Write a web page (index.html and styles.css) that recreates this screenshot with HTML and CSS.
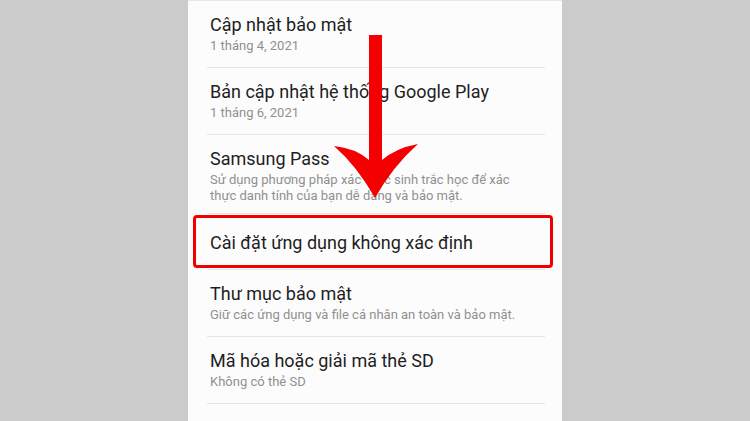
FILE: index.html
```html
<!DOCTYPE html>
<html lang="vi">
<head>
<meta charset="utf-8">
<link rel="stylesheet" href="styles.css">
</head>
<body>
<div class="stage">
  <div class="panel">
    <div class="item">
      <div class="title">Cập nhật bảo mật</div>
      <div class="desc">1 tháng 4, 2021</div>
    </div>
    <div class="item">
      <div class="title">Bản cập nhật hệ thống Google Play</div>
      <div class="desc">1 tháng 6, 2021</div>
    </div>
    <div class="item tight">
      <div class="title">Samsung Pass</div>
      <div class="desc">Sử dụng phương pháp xác thực sinh trắc học để xác thực danh tính của bạn dễ dàng và bảo mật.</div>
    </div>
    <div class="item single highlight">
      <div class="title">Cài đặt ứng dụng không xác định</div>
    </div>
    <div class="item">
      <div class="title">Thư mục bảo mật</div>
      <div class="desc">Giữ các ứng dụng và file cá nhân an toàn và bảo mật.</div>
    </div>
    <div class="item">
      <div class="title">Mã hóa hoặc giải mã thẻ SD</div>
      <div class="desc">Không có thẻ SD</div>
    </div>
    <div class="item last">
      <div class="title">Cài đặt bảo mật khác</div>
    </div>
  </div>
  <svg class="arrow" width="750" height="421" viewBox="0 0 750 421">
    <path d="M369 35 L382 35 L382 160 Q396 148 418 144 Q393 166 375 198 Q357 166 334 146 Q355 148 369 160 Z" fill="#f40000"/>
  </svg>
</div>
</body>
</html>
```
FILE: styles.css
```css
html, body {
  margin: 0;
  padding: 0;
}
body {
  width: 750px;
  height: 421px;
  overflow: hidden;
  background: #cbcbcb;
  font-family: Roboto, "Noto Sans", sans-serif;
}
.stage {
  position: relative;
  width: 750px;
  height: 421px;
}
.panel {
  margin-left: 188px;
  width: 374px;
  height: 421px;
  background: #fcfcfc;
  border-top: 1px solid #e8e8e8;
  box-sizing: border-box;
  overflow: hidden;
}
.item {
  margin: 0 17px 0 19px;
  padding: 12px 0 13px 3px;
  border-bottom: 1px solid #e6e6e6;
}
.title {
  font-size: 18px;
  line-height: 24px;
  color: #1e1e1e;
}
.desc {
  font-size: 13px;
  line-height: 16px;
  color: #909090;
  margin-top: 1px;
  padding-right: 20px;
}
.item.tight {
  padding-bottom: 9px;
}
.item.single {
  padding-top: 17px;
  padding-bottom: 14px;
}
.item.last {
  padding-top: 15px;
}
.highlight {
  position: relative;
}
.highlight::after {
  content: "";
  position: absolute;
  left: -14px;
  right: -8px;
  top: 1px;
  bottom: 1px;
  border: 3px solid #f20000;
  border-radius: 4px;
}
.arrow {
  position: absolute;
  left: 0;
  top: 0;
  pointer-events: none;
}
```
